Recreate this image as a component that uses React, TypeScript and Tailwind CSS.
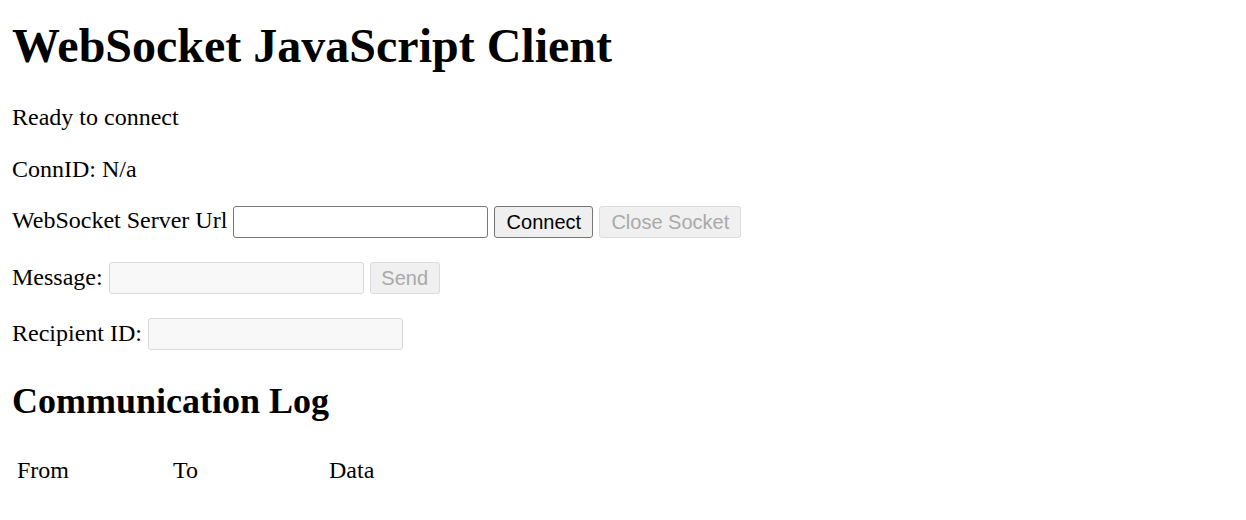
import React from "react";

export default function App() {
  const serif = { fontFamily: '"Liberation Serif", "Times New Roman", serif' };
  return (
    <div className="px-[12px] text-[24px] leading-[28px] text-black bg-white min-h-[520px]" style={serif}>
      <h1 className="mt-[18px] text-[48px] leading-[55px] font-bold">WebSocket JavaScript Client</h1>
      <p className="mt-[30px]">Ready to connect</p>
      <p className="mt-[24px]">ConnID: N/a</p>
      <div className="mt-[23px] flex items-start h-[32px]">
        <span>WebSocket Server Url</span>
        <input
          type="text"
          className="ml-[6px] w-[255px] h-[32px] border border-[#767676] rounded-[3px] bg-white px-[3px] text-[20px] font-['Liberation_Sans',Arial,sans-serif]"
        />
        <button className="ml-[6px] w-[99px] h-[32px] border border-[#767676] rounded-[3px] bg-[#efefef] text-[20px] leading-[30px] text-black font-['Liberation_Sans',Arial,sans-serif]">
          Connect
        </button>
        <button
          disabled
          className="ml-[6px] w-[142px] h-[32px] border border-[#dcdcdc] rounded-[3px] bg-[#f0f0f0] text-[20px] leading-[30px] text-[#a9a9a9] font-['Liberation_Sans',Arial,sans-serif]"
        >
          Close Socket
        </button>
      </div>
      <div className="mt-[24px] flex items-start h-[32px]">
        <span className="pt-[1px]">Message:</span>
        <input
          type="text"
          disabled
          className="ml-[6px] w-[255px] h-[32px] border border-[#d8d8d8] rounded-[3px] bg-[#f8f8f8] px-[3px] text-[20px] font-['Liberation_Sans',Arial,sans-serif]"
        />
        <button
          disabled
          className="ml-[6px] w-[70px] h-[32px] border border-[#dcdcdc] rounded-[3px] bg-[#f0f0f0] text-[20px] leading-[30px] text-[#a9a9a9] font-['Liberation_Sans',Arial,sans-serif]"
        >
          Send
        </button>
      </div>
      <div className="mt-[24px] flex items-start h-[32px]">
        <span className="pt-[1px]">Recipient ID:</span>
        <input
          type="text"
          disabled
          className="ml-[6px] w-[255px] h-[32px] border border-[#d8d8d8] rounded-[3px] bg-[#f8f8f8] px-[3px] text-[20px] font-['Liberation_Sans',Arial,sans-serif]"
        />
      </div>
      <h2 className="mt-[31px] text-[36px] leading-[41px] font-bold">Communication Log</h2>
      <div className="mt-[34px] flex pl-[5px]">
        <div className="w-[156px]">From</div>
        <div className="w-[156px]">To</div>
        <div className="w-[156px]">Data</div>
      </div>
    </div>
  );
}
